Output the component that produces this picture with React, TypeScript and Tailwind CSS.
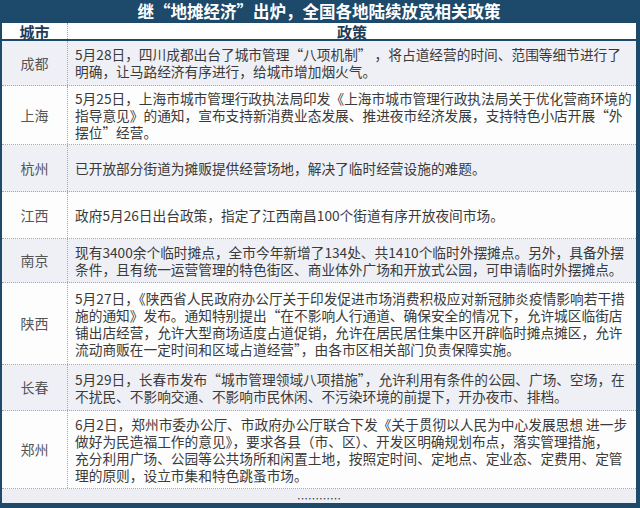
import React from 'react';

interface PolicyRow {
  city: string;
  height: string;
  bg: string;
  lines: string[];
}

const rows: PolicyRow[] = [
  {
    city: '成都',
    height: 'h-[45px]',
    bg: 'bg-[#eff0f5]',
    lines: [
      '5月28日，四川成都出台了城市管理“八项机制” ，将占道经营的时间、范围等细节进行了',
      '明确，让马路经济有序进行，给城市增加烟火气。',
    ],
  },
  {
    city: '上海',
    height: 'h-[59px]',
    bg: 'bg-[#fdfdfd]',
    lines: [
      '5月25日，上海市城市管理行政执法局印发《上海市城市管理行政执法局关于优化营商环境的',
      '指导意见》的通知，宣布支持新消费业态发展、推进夜市经济发展，支持特色小店开展“外',
      '摆位”经营。',
    ],
  },
  {
    city: '杭州',
    height: 'h-[47px]',
    bg: 'bg-[#eff0f5]',
    lines: ['已开放部分街道为摊贩提供经营场地，解决了临时经营设施的难题。'],
  },
  {
    city: '江西',
    height: 'h-[47px]',
    bg: 'bg-[#fdfdfd]',
    lines: ['政府5月26日出台政策，指定了江西南昌100个街道有序开放夜间市场。'],
  },
  {
    city: '南京',
    height: 'h-[44px]',
    bg: 'bg-[#eff0f5]',
    lines: [
      '现有3400余个临时摊点，全市今年新增了134处、共1410个临时外摆摊点。另外，具备外摆',
      '条件，且有统一运营管理的特色街区、商业体外广场和开放式公园，可申请临时外摆摊点。',
    ],
  },
  {
    city: '陕西',
    height: 'h-[82px]',
    bg: 'bg-[#fdfdfd]',
    lines: [
      '5月27日，《陕西省人民政府办公厅关于印发促进市场消费积极应对新冠肺炎疫情影响若干措',
      '施的通知》发布。通知特别提出“在不影响人行通道、确保安全的情况下，允许城区临街店',
      '铺出店经营，允许大型商场适度占道促销，允许在居民居住集中区开辟临时摊点摊区，允许',
      '流动商贩在一定时间和区域占道经营”，由各市区相关部门负责保障实施。',
    ],
  },
  {
    city: '长春',
    height: 'h-[46px]',
    bg: 'bg-[#eff0f5]',
    lines: [
      '5月29日，长春市发布“城市管理领域八项措施”，允许利用有条件的公园、广场、空场，在',
      '不扰民、不影响交通、不影响市民休闲、不污染环境的前提下，开办夜市、排档。',
    ],
  },
  {
    city: '郑州',
    height: 'h-[78px]',
    bg: 'bg-[#fdfdfd]',
    lines: [
      '6月2日，郑州市委办公厅、市政府办公厅联合下发《关于贯彻以人民为中心发展思想 进一步',
      '做好为民造福工作的意见》，要求各县（市、区）、开发区明确规划布点，落实管理措施，',
      '充分利用广场、公园等公共场所和闲置土地，按照定时间、定地点、定业态、定费用、定管',
      '理的原则，设立市集和特色跳蚤市场。',
    ],
  },
];

const font = { fontFamily: '"Noto Sans CJK SC", "Noto Sans", sans-serif' };

export default function App() {
  return (
    <div
      className="w-[640px] h-[508px] bg-[#1d4a6b] flex flex-col pl-[2px] pr-[4px] pb-[5px] overflow-hidden"
      style={font}
    >
      {/* Title */}
      <div className="h-[23px] flex items-center justify-center text-white font-bold text-[16.5px] leading-none">
        继“地摊经济”出炉，全国各地陆续放宽相关政策
      </div>

      {/* Header */}
      <div className="h-[18px] flex bg-white border-b-2 border-[#1d4a6b] text-[#1f3d58] font-bold text-[15px] leading-none">
        <div className="w-[66px] flex items-center justify-center border-r border-dotted border-gray-400">
          城市
        </div>
        <div className="flex-1 flex items-center justify-center">政策</div>
      </div>

      {/* Rows */}
      {rows.map((row) => (
        <div
          key={row.city}
          className={`${row.height} ${row.bg} flex border-b border-dotted border-[#a8a8a8]`}
        >
          <div className="w-[66px] flex items-center justify-center border-r border-dotted border-[#a8a8a8] text-[14px] text-[#555]">
            {row.city}
          </div>
          <div className="flex-1 flex flex-col justify-center pl-[7px] text-[13.7px] leading-[17px] text-[#3a3a3a] overflow-hidden">
            {row.lines.map((line, i) => (
              <div key={i} className="whitespace-nowrap h-[17px]">
                {line}
              </div>
            ))}
          </div>
        </div>
      ))}

      {/* More */}
      <div className="flex-1 bg-[#eceef3] flex items-end justify-center text-[11px] leading-[9px] text-[#333]">
        …………
      </div>
    </div>
  );
}
